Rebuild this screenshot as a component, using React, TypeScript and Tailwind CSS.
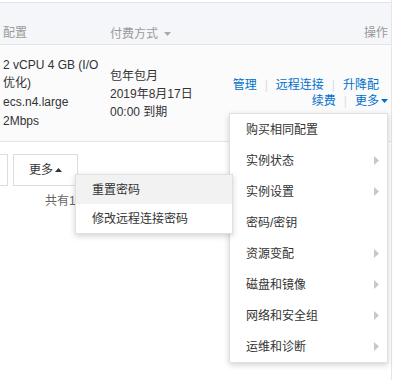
import { ReactNode } from "react"

const font = { fontFamily: '"Liberation Sans", "Noto Sans CJK SC", sans-serif' }

const moreMenu = [
  { label: "购买相同配置", sub: false },
  { label: "实例状态", sub: true },
  { label: "实例设置", sub: true },
  { label: "密码/密钥", sub: false },
  { label: "资源变配", sub: true },
  { label: "磁盘和镜像", sub: true },
  { label: "网络和安全组", sub: true },
  { label: "运维和诊断", sub: true },
]

const Sep = () => <span className="mx-[8px] text-[#dcdcdc]">|</span>

const Link = ({ children }: { children: ReactNode }) => (
  <span className="text-[#0070cc]">{children}</span>
)

const App = () => {
  return (
    <div
      className="relative w-[399px] h-[380px] overflow-hidden bg-white text-[12px] text-[#333]"
      style={font}
    >
      <div className="w-[392px] h-full border-r border-[#e6e6e6]">
        <div className="h-[2px]" />
        {/* table header */}
        <div className="flex h-[43px] pt-[21px] leading-[18px] bg-[#f5f6f9] border-t border-b border-[#e3e4e8] text-[#999]">
          <div className="w-[110px] pl-[3px]">配置</div>
          <div className="flex items-center">
            付费方式
            <svg width="7" height="4" viewBox="0 0 7 4" className="ml-[6px]">
              <path d="M0 0h7L3.5 4z" fill="#aaa" />
            </svg>
          </div>
          <div className="ml-auto pr-[3px]">操作</div>
        </div>

        {/* instance row */}
        <div className="flex items-center h-[97px] bg-[#fbfbfc] border-b border-[#e5e5e5]">
          <div className="w-[110px] pl-[3px] leading-[18.7px]">
            <div>2 vCPU 4 GB (I/O</div>
            <div>优化)</div>
            <div>ecs.n4.large</div>
            <div>2Mbps</div>
          </div>
          <div className="leading-[18px] pt-[1px]">
            <div>包年包月</div>
            <div>2019年8月17日</div>
            <div>00:00 到期</div>
          </div>
          <div className="ml-auto pr-[3px] leading-[16px] text-right">
            <div className="pr-[9px]">
              <Link>管理</Link>
              <Sep />
              <Link>远程连接</Link>
              <Sep />
              <Link>升降配</Link>
            </div>
            <div className="flex items-center justify-end">
              <Link>续费</Link>
              <Sep />
              <Link>更多</Link>
              <svg width="7" height="4" viewBox="0 0 7 4" className="ml-[2px]">
                <path d="M0 0h7L3.5 4z" fill="#0070cc" />
              </svg>
            </div>
          </div>
        </div>

        {/* footer actions */}
        <div className="flex gap-[5px] ml-[-10px] mt-[12px]">
          <div className="w-[18px] h-[32px] border border-[#ddd] bg-white" />
          <div className="w-[65px] h-[32px] border border-[#ddd] bg-white flex items-center justify-center">
            更多
            <svg width="7" height="4" viewBox="0 0 7 4" className="ml-[2px]">
              <path d="M0 4h7L3.5 0z" fill="#333" />
            </svg>
          </div>
        </div>
        <div className="pl-[45px] mt-[6px] text-[#666]">共有1</div>
      </div>

      {/* more menu */}
      <div className="absolute left-[229px] top-[113px] w-[159px] bg-white border border-[#e0e0e0] shadow-[0_2px_6px_rgba(0,0,0,0.18)]">
        {moreMenu.map((item) => (
          <div key={item.label} className="flex items-center h-[31px] pl-[16px] pr-[8px]">
            <span>{item.label}</span>
            {item.sub && (
              <svg width="5" height="9" viewBox="0 0 5 9" className="ml-auto">
                <path d="M0 0l5 4.5L0 9z" fill="#c8c8c8" />
              </svg>
            )}
          </div>
        ))}
      </div>

      {/* password submenu */}
      <div className="absolute left-[75px] top-[174px] w-[158px] bg-white border border-[#e0e0e0] shadow-[0_2px_6px_rgba(0,0,0,0.18)]">
        <div className="flex items-center h-[29px] pl-[16px] bg-[#f2f2f2]">重置密码</div>
        <div className="flex items-center h-[29px] pl-[16px]">修改远程连接密码</div>
      </div>
    </div>
  )
}

export default App
